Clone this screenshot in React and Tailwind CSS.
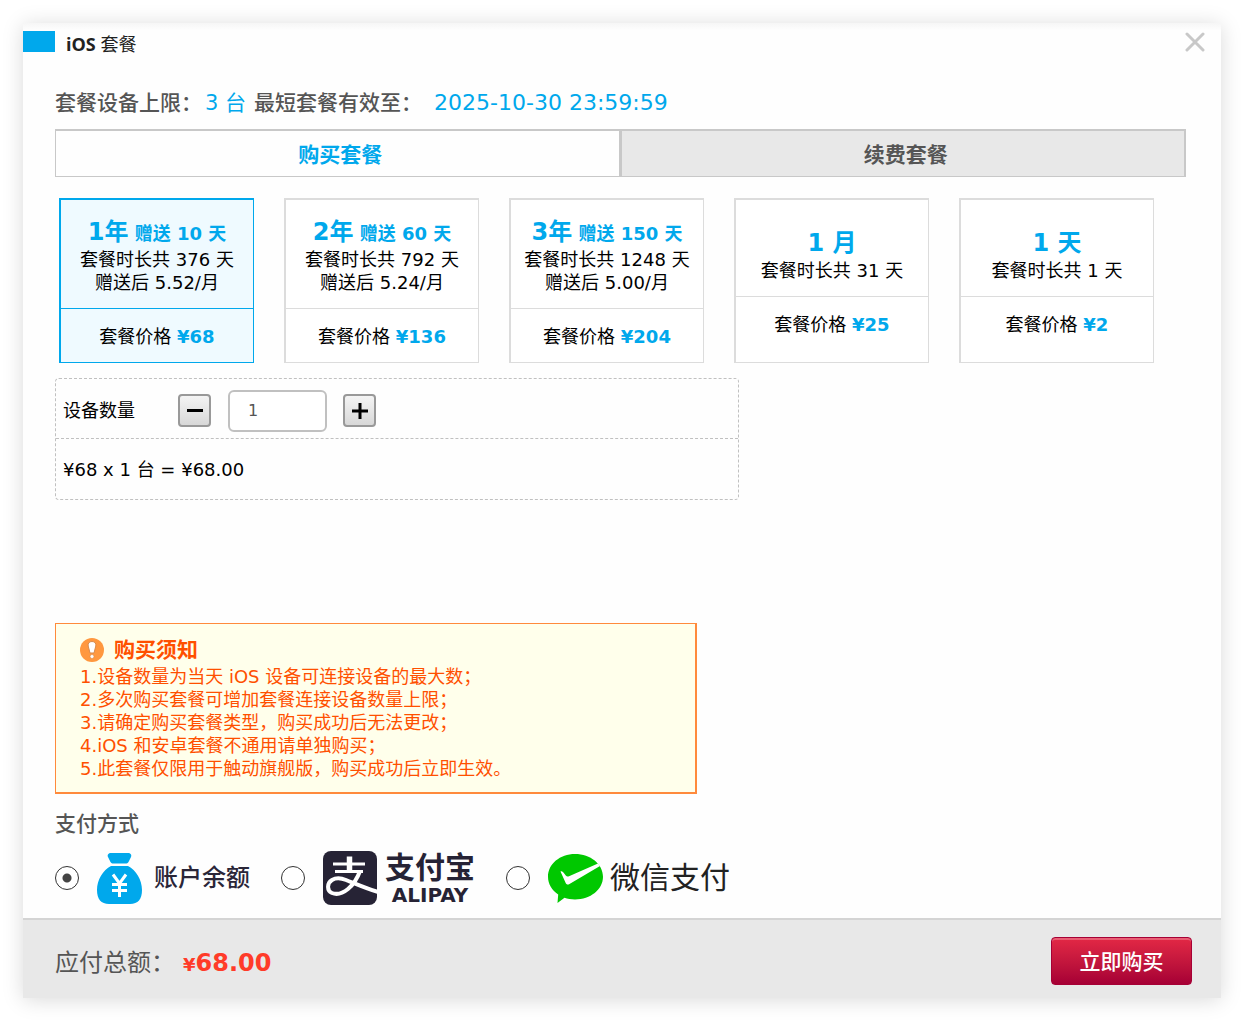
import React, { useState } from 'react'
import clsx from 'clsx'

const PLANS = [
  { id: '1y', name: '1年', gift: '赠送 10 天', days: 376, monthly: '5.52', price: 68 },
  { id: '2y', name: '2年', gift: '赠送 60 天', days: 792, monthly: '5.24', price: 136 },
  { id: '3y', name: '3年', gift: '赠送 150 天', days: 1248, monthly: '5.00', price: 204 },
  { id: '1m', name: '1 月', days: 31, price: 25 },
  { id: '1d', name: '1 天', days: 1, price: 2 },
]

const NOTES = [
  '1.设备数量为当天 iOS 设备可连接设备的最大数；',
  '2.多次购买套餐可增加套餐连接设备数量上限；',
  '3.请确定购买套餐类型，购买成功后无法更改；',
  '4.iOS 和安卓套餐不通用请单独购买；',
  '5.此套餐仅限用于触动旗舰版，购买成功后立即生效。',
]

const MoneyBag = () => (
  <svg width="45" height="51" viewBox="0 0 45 51" aria-hidden="true">
    <path
      fill="#00a8ec"
      d="M14 0h17c2.500 0 4 2 3 4l-2.500 5c-.8 1.200-1.500 1.500-3 1.500h-12c-1.500 0-2.200-.3-3-1.500L11 4c-1-2 .5-4 3-4zM14 13h17c8 4 14 14 14 24 0 9-4 14-12 14H12C4 51 0 46 0 37c0-10 6-20 14-24z"
    />
    <path
      d="M16 21.500l6.500 9 6.500-9M22.500 30v14M15 31.500h15M15 37.500h15"
      fill="none"
      stroke="#fff"
      strokeWidth="3"
    />
  </svg>
)

const AlipayMark = () => (
  <svg width="54" height="54" viewBox="0 0 54 54" aria-hidden="true">
    <rect width="54" height="54" rx="8" fill="#262335" />
    <path d="M10 13h32M12 20.500h28" stroke="#fff" strokeWidth="3.200" fill="none" />
    <path d="M26.500 5.500v15" stroke="#fff" strokeWidth="5.500" fill="none" />
    <path
      d="M37 20c-2.500 7-6 13-12 18-5 4-11 6-16 4C3.500 39.500 4 32 9 29c4-2.400 9-2 14 0 9 3.500 19 8 32 12"
      stroke="#fff"
      strokeWidth="4"
      fill="none"
    />
  </svg>
)

const WechatMark = () => (
  <svg width="55" height="49" viewBox="0 0 55 49" aria-hidden="true">
    <path
      fill="#00c800"
      d="M27 0c15.500 0 28 10 28 22.800S42.500 45.500 27 45.500c-4 0-7.500-.500-10.500-1.700L9.500 49l.700-8.500C4 36.500 0 30 0 22.800 0 10 12 0 27 0z"
    />
    <path fill="#fff" d="M12.500 17.500c1.500-.800 2.500.200 5.500 4.300.800 1 2 .900 3 .400L50 9.500 52 12 21.500 30c-2 1-3 .5-3.800-1z" />
  </svg>
)

const NoticeIcon = () => (
  <svg width="24" height="24" viewBox="0 0 24 24" aria-hidden="true">
    <circle cx="12" cy="12" r="12" fill="#ff983f" />
    <path d="M12 3.500c3 0 4.200 2 3.800 4.500L14 15h-4L8.200 8C7.800 5.500 9 3.500 12 3.500z" fill="#fff" stroke="#d98a4a" />
    <circle cx="12" cy="18.500" r="2" fill="#fff" stroke="#d98a4a" strokeWidth=".6" />
  </svg>
)

const PlanCard = ({ plan, active, onSelect }) => {
  return (
    <button
      type="button"
      aria-pressed={active}
      onClick={onSelect}
      className={clsx(
        'flex flex-col justify-start border border-t-2 border-l-2 text-lg leading-[23px] whitespace-nowrap',
        active ? 'border-[#00a8ec] bg-[#effaff]' : 'border-[#dcdcdc] bg-white'
      )}
    >
      <span
        className={clsx(
          'w-full flex flex-col items-center border-b pb-[14px]',
          plan.gift ? 'pt-4' : 'pt-[27px]',
          active ? 'border-[#00a8ec]' : 'border-[#dcdcdc]'
        )}
      >
        <span className="font-bold text-[#00a8ec]">
          <span className="text-2xl leading-8">{plan.name}</span>
          {plan.gift && <span> {plan.gift}</span>}
        </span>
        <span>套餐时长共 {plan.days} 天</span>
        {plan.monthly && <span>赠送后 {plan.monthly}/月</span>}
      </span>
      <span className="w-full pt-4 pb-[14px]">
        套餐价格 <b className="text-[#00a8ec]">¥{plan.price}</b>
      </span>
    </button>
  )
}

const PayOption = ({ value, checked, onChange, children }) => (
  <label className="flex items-center gap-[18px]">
    <input
      type="radio"
      name="pay"
      value={value}
      checked={checked}
      onChange={onChange}
      className="appearance-none w-6 h-6 rounded-full border border-[#333] bg-white checked:bg-[radial-gradient(circle,#444_0_4px,transparent_5px)]"
    />
    {children}
  </label>
)

const stepButton =
  'w-[33px] h-[33px] flex items-center justify-center rounded border-2 border-[#999] bg-linear-to-b from-[#f4f4f4] to-[#d8d8d8]'

const App = () => {
  const [tab, setTab] = useState('buy')
  const [planId, setPlanId] = useState('1y')
  const [count, setCount] = useState(1)
  const [pay, setPay] = useState('balance')

  const plan = PLANS.find((p) => p.id === planId)
  const total = (plan.price * count).toFixed(2)

  return (
    <div className="p-[23px] bg-white text-black font-['DejaVu_Sans','Noto_Sans_CJK_SC',sans-serif]">
      <main className="bg-[#fefefe] shadow-[0_2px_20px_rgba(0,0,0,0.15)]">
        <header className="flex items-center justify-between h-[37px] pr-4 bg-linear-to-b from-[#f6f6f6] to-[#fefefe] to-20%">
          <div className="flex items-center gap-[11px]">
            <span className="w-8 h-[21px] bg-[#00a8ec]"></span>
            <h1 className="pt-1 text-lg text-[#222] font-['Open_Sans','Noto_Sans_CJK_SC',sans-serif]">
              <b>iOS</b> 套餐
            </h1>
          </div>
          <button type="button" aria-label="关闭">
            <svg width="20" height="20" viewBox="0 0 20 20">
              <path d="M2 2l16 16M18 2L2 18" stroke="#c8c8c8" strokeWidth="3" strokeLinecap="round" />
            </svg>
          </button>
        </header>

        <div className="pl-8 pr-[35px]">
          <p className="flex items-center pt-[27px] pb-[10px] text-[21px] leading-8 font-medium text-[#555] whitespace-nowrap">
            套餐设备上限：
            <span className="ml-[3px] mr-2 font-normal text-[#00a8ec]">3 台</span>
            最短套餐有效至：
            <time className="ml-3 text-[22px] font-normal text-[#00a8ec]">2025-10-30 23:59:59</time>
          </p>

          <div role="tablist" className="flex border border-t-2 border-r-2 border-[#c8c8c8] text-[21px] leading-[41px] font-bold">
            <button
              type="button"
              role="tab"
              aria-selected={tab === 'buy'}
              onClick={() => setTab('buy')}
              className={clsx('flex-1 pt-1 pl-1.5', tab === 'buy' ? 'text-[#00a8ec]' : 'bg-[#e8e8e8] text-[#555]')}
            >
              购买套餐
            </button>
            <button
              type="button"
              role="tab"
              aria-selected={tab === 'renew'}
              onClick={() => setTab('renew')}
              className={clsx(
                'flex-1 pt-1 pl-1.5 border-l-3 border-[#c8c8c8]',
                tab === 'renew' ? 'text-[#00a8ec]' : 'bg-[#e8e8e8] text-[#555]'
              )}
            >
              续费套餐
            </button>
          </div>

          <div className="grid grid-cols-5 gap-[30px] mt-[21px] ml-1 mr-8">
            {PLANS.map((p) => (
              <PlanCard key={p.id} plan={p} active={p.id === planId} onSelect={() => setPlanId(p.id)} />
            ))}
          </div>

          <div className="max-w-[684px] mt-[15px] border border-dashed border-[#c0c0c0] rounded text-lg">
            <div className="flex items-center h-[60px] pt-1 pl-[7px] border-b border-dashed border-[#c0c0c0]">
              <label htmlFor="count" className="w-[115px]">
                设备数量
              </label>
              <button
                type="button"
                aria-label="减少"
                className={stepButton}
                onClick={() => setCount(Math.max(1, count - 1))}
              >
                <span className="w-4 h-[3px] bg-black"></span>
              </button>
              <input
                id="count"
                type="text"
                value={count}
                onChange={(e) => setCount(Number(e.target.value) || 1)}
                className="w-[99px] h-[42px] ml-[17px] mr-4 px-[18px] border-2 border-[#c0c0c0] rounded-md bg-white text-base text-[#555]"
              />
              <button type="button" aria-label="增加" className={stepButton} onClick={() => setCount(count + 1)}>
                <svg width="16" height="16" viewBox="0 0 16 16">
                  <path d="M0 8h16M8 0v16" stroke="#000" strokeWidth="3" />
                </svg>
              </button>
            </div>
            <p className="pt-[2px] pl-[7px] leading-[58px]">
              ¥{plan.price} x {count} 台 = ¥{total}
            </p>
          </div>

          <section className="max-w-[642px] mt-[123px] pt-[11px] pb-3 pl-6 border border-b-2 border-r-2 border-[#ff8a3c] bg-[#ffffeb] text-lg leading-[23px] text-[#ff5000]">
            <h2 className="flex items-center gap-[10px] text-[21px] leading-[30px] font-bold">
              <NoticeIcon />
              购买须知
            </h2>
            <ul>
              {NOTES.map((note) => (
                <li key={note}>{note}</li>
              ))}
            </ul>
          </section>

          <h2 className="pt-[14px] text-[21px] leading-8 font-medium text-[#555]">支付方式</h2>
          <div className="flex items-center gap-[31px] pt-[11px] pb-[13px] whitespace-nowrap">
            <PayOption value="balance" checked={pay === 'balance'} onChange={() => setPay('balance')}>
              <span className="flex items-center gap-3 text-2xl font-medium text-[#2a2638]">
                <MoneyBag />
                账户余额
              </span>
            </PayOption>
            <PayOption value="alipay" checked={pay === 'alipay'} onChange={() => setPay('alipay')}>
              <span className="flex items-center gap-2 text-[#262335]">
                <AlipayMark />
                <span className="flex flex-col items-center font-bold">
                  <span className="text-[30px] leading-[34px]">支付宝</span>
                  <span className="text-xl leading-5">ALIPAY</span>
                </span>
              </span>
            </PayOption>
            <PayOption value="wechat" checked={pay === 'wechat'} onChange={() => setPay('wechat')}>
              <span className="flex items-center gap-[7px] text-[30px] leading-9 text-[#222]">
                <WechatMark />
                微信支付
              </span>
            </PayOption>
          </div>
        </div>

        <footer className="flex items-center justify-between h-20 pl-8 pr-[29px] pt-1 border-t-2 border-[#d4d4d4] bg-[#e8e8e8]">
          <p className="flex items-center gap-2 pt-1 text-2xl text-[#555]">
            应付总额：
            <b className="text-[#ff3b29]">
              <span className="text-lg">¥</span>
              {total}
            </b>
          </p>
          <button
            type="button"
            className="w-[141px] h-12 pt-1 rounded border border-[#a60035] bg-linear-to-b from-[#e32845] to-[#a60035] text-[21px] font-medium text-white shadow-[inset_0_2px_0_rgba(255,255,255,0.25)]"
          >
            立即购买
          </button>
        </footer>
      </main>
    </div>
  )
}

export default App
